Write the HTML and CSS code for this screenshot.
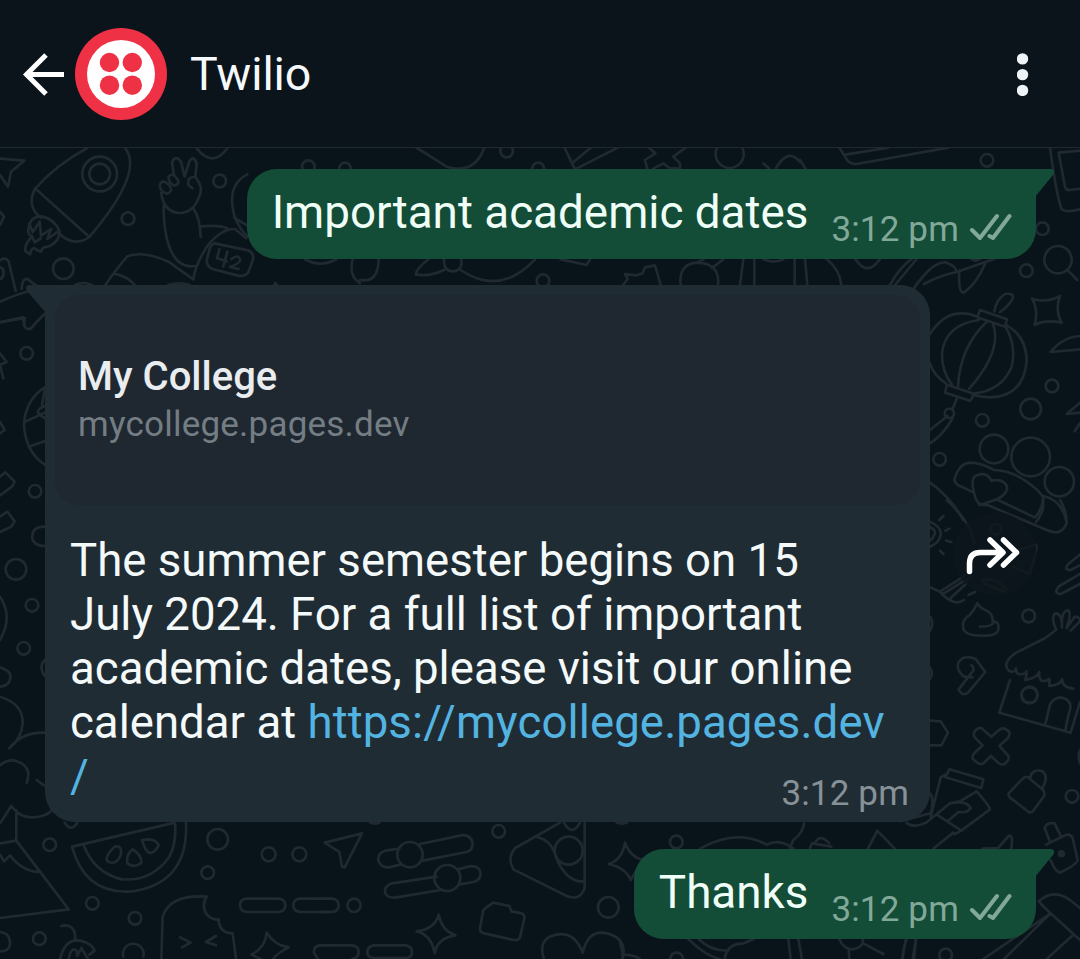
FILE: index.html
```html
<!DOCTYPE html>
<html lang="en">
<head>
<meta charset="utf-8">
<title>Twilio</title>
<link rel="stylesheet" href="styles.css">
</head>
<body>
<div class="app">
  <header class="topbar">
    <svg class="back" width="44" height="44" viewBox="0 0 44 44"><path d="M42 22.500H4M24 3 4.500 22.500l19.500 19.500"/></svg>
    <svg class="avatar" width="92" height="92" viewBox="0 0 92 92"><circle cx="46" cy="46" r="46" fill="#ef3146"/><circle cx="46" cy="46" r="34" fill="#fff"/><g fill="#ef3146"><circle cx="34.500" cy="34.500" r="9.700"/><circle cx="57.300" cy="34.500" r="9.700"/><circle cx="34.500" cy="57.200" r="9.700"/><circle cx="57.300" cy="57.200" r="9.700"/></g></svg>
    <h1 class="contact">Twilio</h1>
    <svg class="more" width="12" height="44" viewBox="0 0 12 44"><circle cx="5.500" cy="6.900" r="5.700"/><circle cx="5.500" cy="22.600" r="5.700"/><circle cx="5.500" cy="38.400" r="5.700"/></svg>
  </header>

  <main class="chat">
    <svg class="wallpaper" width="1080" height="811" viewBox="0 148 1080 811">
      <!-- rocket, peace hand, phone -->
      <g transform="translate(0 145) scale(.33333)">
        <path d="M0 41 73 47 33 80 24 125 0 90M0 200 12 215 0 240M260 10Q165 62 105 132C82 175 103 205 124 218M105 130 268 276M376 10C415 60 375 150 268 276Q222 308 178 266M124 214Q94 214 88 240 79 268 96 274 72 300 76 318L90 328Q96 300 109 314L122 320 130 308 151 302Q181 286 178 257 164 222 124 214M88 235 98 262 119 230 123 272 153 252 142 282 174 260M96 274 104 292 122 280M316 420Q350 370 382 334 430 316 505 350L580 403Q585 360 624 300 666 250 705 252L738 280M344 386Q382 394 404 420"/>
        <circle cx="299" cy="87" r="52"/><circle cx="299" cy="87" r="31"/><circle cx="384" cy="221" r="19"/><circle cx="190" cy="371" r="31"/><circle cx="659" cy="108" r="19"/><circle cx="925" cy="65" r="19"/><circle cx="1035" cy="70" r="17"/>
        <path d="M522 92 516 52Q526 28 543 50L554 94 568 50Q580 28 590 55L586 96Q613 129 596 158 579 205 535 204 490 198 484 144M480 118Q488 101 507 120 522 140 500 146 478 139 480 118M506 95Q518 80 533 104 540 119 522 122 504 112 506 95M577 130 565 120Q561 96 582 96M491 184Q490 250 506 300 530 372 586 363M580 190Q600 219 602 276M602 244Q660 240 682 250M742 88Q690 115 697 180 700 230 742 276M702 218 740 240M590 10Q638 70 682 10M0 346Q18 334 26 350L47 438M0 470Q60 444 90 438M65 432Q66 400 82 402L112 424M0 532 75 519 72 540M0 366Q14 370 10 390 6 402 0 402"/>
        <path d="M644 295 744 316Q767 326 756 352L745 382Q733 396 714 392L640 373Q617 364 621 342L630 307Q635 296 644 295M658 312 651 340 680 349M682 320 670 364M694 342Q716 326 720 344 722 354 690 366L716 372"/>
        <path d="M225 420Q250 408 275 420M505 420Q535 410 570 420M820 424l6-10 8 10M915 342Q960 370 1010 342M1058 342Q1045 395 1080 414"/>
      </g>
      <!-- strip above and below the first outgoing bubble -->
      <g transform="translate(360 140) scale(.33333)">
        <path d="M168 22 260 80Q345 105 373 22M613 22 645 88M638 68 694 22M645 88 775 22M868 24 886 40 855 60 862 86M880 86 910 70 928 84 960 86 960 70 940 50 976 24M1210 70 1228 86M1248 84Q1285 22 1320 66M0 420Q55 430 56 358M205 358Q165 390 168 404 210 410 252 390M252 358Q250 394 280 394 310 390 303 358M302 390Q420 470 525 358M602 358 680 375 690 358M790 434 803 416 795 402 830 406 848 400 855 382 885 376 902 434M962 434Q955 368 1018 368 1080 374 1074 434M1010 368 1030 358M1056 384 1090 358M1140 434 1150 358M1183 358V432M1304 358V432M1210 358Q1240 372 1270 358"/>
        <circle cx="440" cy="33" r="19"/><path d="M516 86Q520 68 535 68T552 86"/><circle cx="1109" cy="42" r="42"/><circle cx="549" cy="422" r="19"/>
      </g>
      <!-- book, photo, magnifier, fish -->
      <g transform="translate(800 0) scale(.33333)">
        <path d="M0 480 17 506M118 443 140 478Q150 494 170 492L445 443M136 464 265 443M750 443Q768 580 784 625 792 640 840 628M840 452 776 458 795 560Q798 572 810 570L840 566M804 812 832 840M166 777Q202 832 240 777M15 777 22 855M80 777Q120 810 124 855M270 855Q300 800 336 777M285 855 350 777M338 870Q400 780 440 788 470 800 470 816 420 826 372 852M470 816 582 777M478 812Q474 880 492 878 530 850 555 792M515 777 526 782 540 777"/>
        <circle cx="561" cy="481" r="19"/><circle cx="727" cy="686" r="19"/><circle cx="679" cy="812" r="19"/><circle cx="774" cy="779" r="41"/>
      </g>
      <!-- lantern, star, thumbs up -->
      <g transform="translate(900 260) scale(.33333)">
        <path d="M90 222Q130 158 188 160 210 160 232 170M232 172 240 150 321 178 315 200ZM283 154Q288 120 315 102 344 98 338 115 330 136 300 156M320 196Q380 230 380 304 370 410 270 412 240 410 218 404M90 310Q100 345 140 372M140 374 136 398 210 422 224 402ZM236 180Q135 195 126 280 125 335 156 374M262 184Q180 260 174 380M278 188Q310 270 208 386M318 202Q350 260 335 320 305 392 222 400M170 416 158 446M142 468 90 510M158 474Q130 525 90 550M396 116Q440 130 480 108 464 150 485 188 440 178 404 194 416 150 396 116M540 228Q490 230 452 276L540 268M540 428 500 462 540 458M540 490 524 514M222 698 175 676Q158 665 166 650 180 610 210 608 244 608 282 630 330 630 380 665 432 702 430 720 420 760 404 772L294 720M222 698Q212 660 225 648 260 632 274 662 315 655 322 684 318 704 294 716L240 736Q225 718 222 698M430 708Q485 720 498 780M90 668Q150 710 190 780"/>
        <circle cx="148" cy="460" r="14"/><circle cx="456" cy="378" r="19"/><circle cx="392" cy="447" r="31"/><circle cx="247" cy="481" r="19"/><circle cx="282" cy="567" r="43"/><circle cx="392" cy="591" r="58"/><circle cx="478" cy="665" r="44"/><circle cx="119" cy="598" r="19"/>
      </g>
      <!-- globe, planet, cupcake on the left edge -->
      <g transform="translate(0 300) scale(.33333)">
        <path d="M0 66 68 52 74 80Q88 98 104 72L133 42M0 160 20 186 0 194 10 235M0 365 14 390 0 400M134 262Q76 300 72 374 76 455 134 494M76 365 134 338M86 440 134 424M134 270 126 314M134 318Q105 330 118 344L134 354M0 530 16 517 44 545 36 560 0 586M0 650 22 635 44 664 34 680 0 696M134 680Q90 680 98 720 108 738 134 738M0 890Q40 950 0 1020M0 1102Q36 1114 31 1135 26 1158 0 1160M134 1080Q115 1100 134 1128M0 1190Q70 1212 68 1270 65 1315 28 1345 65 1296 134 1298M0 1396Q26 1374 50 1384 98 1400 80 1448M110 1440 132 1456M0 1570 34 1518Q60 1554 98 1552 140 1552 160 1526M49 1530V1560"/>
        <circle cx="80" cy="160" r="19"/><circle cx="105" cy="574" r="19"/><circle cx="48" cy="808" r="31"/><circle cx="96" cy="916" r="19"/><circle cx="71" cy="1045" r="19"/>
      </g>
      <!-- compass, swirl, mittens, stall -->
      <g transform="translate(900 500) scale(.33333)">
        <path d="M140 0Q212 65 224 130M236 8Q242 18 260 14L440 90Q485 110 500 70 500 30 480 0M428 0Q436 30 408 66M90 82Q108 90 104 102T90 122M90 65Q126 82 122 105T90 140M118 60 130 48M136 92 148 86M138 122 154 126M120 152 130 162M90 262 120 275 200 224M120 275Q160 322 192 300M126 284 212 230M148 298 200 250M206 284 225 276M540 164 505 192Q490 210 512 210L540 196M540 222 478 258Q458 280 482 282L540 252M232 310Q222 332 208 346 182 360 191 390 206 412 270 406 302 402 294 372 288 362 278 366 280 342 260 332 240 324 232 310M280 367Q278 380 240 380M217 532 192 530Q168 510 175 488 190 462 226 476L256 516 202 580Q184 588 176 568L220 512Q222 500 214 496M468 388Q452 350 466 340 486 338 486 382 482 334 504 330 516 338 500 384L524 350Q540 350 540 364L512 392M468 390 436 414 345 460Q305 490 326 512 345 520 348 505 346 530 376 520 384 502 376 540 410 534 418 516 414 552 444 540 450 528 448 558 482 554 486 538 486 562 520 566 540 550M498 400 540 468M332 518 310 600"/>
        <circle cx="386" cy="348" r="19"/><circle cx="389" cy="584" r="24"/>
        <path d="M90 350Q104 370 90 392M90 504Q102 520 90 536M356 150 406 134Q416 134 396 200L388 222 340 200M246 240Q290 230 318 268L310 274 250 250"/><circle cx="287" cy="88" r="16"/>
      </g>
      <!-- stall base, cross, locks, card -->
      <g transform="translate(900 680) scale(.33333)">
        <path d="M330 0 298 98 512 158 540 66M436 132 450 74Q466 44 496 56 520 70 506 102L496 150M90 122 122 124 144 158 124 196 90 196M248 148 274 170 300 148Q312 140 328 156 330 166 324 174L298 198 324 226Q332 240 310 254 300 254 294 248L273 228 248 252Q234 254 218 236 216 226 224 218L248 196 222 170Q218 154 236 144 244 142 248 148M148 268 250 298 244 324 136 292ZM92 410 122 292 136 284M90 340Q104 360 92 400L0 424M20 428Q40 446 78 428L150 370 180 364 230 334Q270 380 270 388L184 452 114 406M150 370Q200 360 212 384 202 400 176 396L142 424M160 458 100 506M184 452 164 462M366 298 326 340Q324 350 334 356L386 396Q394 400 400 392L434 346 430 330 384 292Q374 288 366 298M390 296Q395 264 428 274 446 290 428 324M450 486 434 444Q440 426 464 430L482 468M438 494 500 464Q512 462 518 474L533 540Q530 554 480 578 464 574 452 540M246 506 294 504 326 468Q340 460 334 506M416 664Q460 624 510 660L540 684M416 664 452 700 312 837M424 674 540 780M452 700 250 837M516 768 440 837M540 210Q532 230 540 250"/>
        <circle cx="388" cy="46" r="24"/><circle cx="516" cy="349" r="19"/><circle cx="484" cy="521" r="7" class="dot"/><circle cx="137" cy="825" r="19"/><path d="M20 777Q10 800 8 837M48 777 42 837"/>
      </g>
      <!-- melon, ice lolly, toggles -->
      <g transform="translate(0 780) scale(.33333)">
        <path d="M49 120V182L206 388 0 414M0 190 49 182M0 224 12 244 30 226Q68 276 122 276M216 200 525 128Q530 190 508 230 455 305 366 298 280 278 250 192M216 200Q255 345 396 334 566 310 558 128M344 200Q368 194 362 226 348 258 324 244 310 234 344 200M398 208Q426 226 424 248 404 266 382 250 378 224 398 208M426 180Q466 172 476 196 462 222 448 218 436 214 426 180M194 128Q212 158 232 128M484 537 488 410Q510 342 620 350 604 374 618 400 634 422 656 418 658 460 698 460L708 537M540 472 572 488 546 502M648 468 618 486 648 496M184 438Q226 428 226 478M180 537Q196 474 240 482 276 490 284 512L268 524M206 537Q214 498 230 512L232 528 244 504 264 537M800 458Q824 496 866 502 830 520 820 537M754 524Q796 504 800 458M754 524 782 537M0 456Q28 458 30 486T0 514M740 356H836Q856 358 856 376T836 396H740Q720 394 720 376T740 356M990 356H900Q880 358 880 376T900 396H990M990 496H960Q940 498 942 518L954 537"/>
        <circle cx="149" cy="194" r="19"/><circle cx="277" cy="370" r="19"/><circle cx="405" cy="415" r="19"/><circle cx="118" cy="476" r="19"/><circle cx="653" cy="178" r="31"/><circle cx="623" cy="278" r="19"/><circle cx="806" cy="223" r="21"/><circle cx="898" cy="223" r="21"/><path d="M370 530A31 31 0 1 1 430 530"/>
      </g>
      <!-- arrow, sliders, pizza, folder, heart -->
      <g transform="translate(320 780) scale(.33333)">
        <path d="M14 188 126 160 74 262 66 260 58 216ZM238 206 196 212Q170 220 176 244 184 264 206 262L242 254M300 192 424 166Q450 162 458 188 458 212 440 216L308 242M350 290 216 310Q190 320 196 340 206 356 230 352L362 330M414 268 454 258Q482 260 482 282 480 302 460 306L416 314M720 128 586 204Q560 232 580 268L740 348Q780 364 794 324V128M654 172Q690 180 704 218 724 288 774 304L794 304M732 128Q755 172 780 128M915 188Q930 232 970 240M915 188Q906 240 866 252 918 264 932 300L950 270M0 356H36Q56 358 56 376T36 396H0M0 496H96Q116 498 116 516T96 537M162 496H256Q276 498 276 516T256 534H162Q142 532 142 516T162 496M356 404Q366 452 406 466 352 474 344 520 334 464 290 454 344 448 356 404M502 380 520 368 568 378 574 394 606 400Q616 406 612 420L600 472Q596 482 580 480L492 460Q478 456 480 444L490 390ZM672 537Q654 484 694 468 760 444 788 518 806 446 860 460 922 474 908 537M908 524Q944 524 960 537M150 128l18 3 10-3M890 128l16 3 14-3"/>
        <circle cx="270" cy="224" r="38"/><circle cx="382" cy="294" r="39"/><circle cx="536" cy="154" r="19"/><circle cx="102" cy="376" r="20"/><circle cx="746" cy="212" r="42"/><circle cx="865" cy="382" r="31"/>
      </g>
      <!-- fragments round the last bubble -->
      <g transform="translate(620 760) scale(.33333)">
        <path d="M240 266Q350 204 440 254 480 234 520 266M552 190Q548 220 520 240L510 264M570 264 576 250 634 260M586 248Q600 220 628 250M744 266 772 212 824 266M205 537Q260 590 300 597M236 537Q270 572 320 572M314 597Q320 550 372 550L400 537M505 537 512 597M535 537 546 597M658 537Q670 568 700 568 734 560 728 537M686 568 688 597M730 550 790 582M858 537 846 597M888 537 878 597M0 550Q10 575 8 597"/>
        <circle cx="169" cy="246" r="19"/><path d="M150 597Q154 578 170 578T190 597"/>
      </g>
    </svg>

    <div class="row sent">
      <div class="bubble out">
        <span class="text">Important academic dates</span>
        <span class="time">3:12 pm</span>
        <svg class="ticks" width="44" height="30" viewBox="0 0 44 30"><path d="M4 18 12 26 29 4M21.500 24 25 26 41.500 4"/></svg>
        <svg class="tail" width="20" height="30" viewBox="0 0 20 30"><path d="M0 0H16Q21 1 18 6L0 28Z"/></svg>
      </div>
    </div>

    <div class="row received">
      <div class="bubble in">
        <svg class="tail" width="20" height="30" viewBox="0 0 20 30"><path d="M20 0H3Q-2 1 1 6L20 28Z"/></svg>
        <div class="preview">
          <div class="site">My College</div>
          <div class="domain">mycollege.pages.dev</div>
        </div>
        <p class="body">The summer semester begins on 15<br>July 2024. For a full list of important<br>academic dates, please visit our online<br>calendar at <a class="link">https://mycollege.pages.dev<br>/</a></p>
        <span class="time">3:12 pm</span>
      </div>
      <div class="forward"><svg width="84" height="84" viewBox="0 0 84 84"><path d="M16.500 59.500V51.500Q16.500 40.500 27.500 40.500H48M37 28 50 40.500 37 53M50.500 28 63.500 40.500 50.500 53"/></svg></div>
    </div>

    <div class="row sent last">
      <div class="bubble out">
        <span class="text">Thanks</span>
        <span class="time">3:12 pm</span>
        <svg class="ticks" width="44" height="30" viewBox="0 0 44 30"><path d="M4 18 12 26 29 4M21.500 24 25 26 41.500 4"/></svg>
        <svg class="tail" width="20" height="30" viewBox="0 0 20 30"><path d="M0 0H16Q21 1 18 6L0 28Z"/></svg>
      </div>
    </div>
  </main>
</div>
</body>
</html>
```
FILE: styles.css
```css
* { box-sizing: border-box; }
body { margin: 0; background: #08131a; font-family: Roboto, "Liberation Sans", sans-serif; }
svg { display: block; flex: none; }
.app { width: 1080px; height: 959px; display: flex; flex-direction: column; overflow: hidden; }
.topbar { height: 148px; flex: none; display: flex; align-items: center; padding: 0 51px 0 22px; background: #0b141b; border-bottom: 1px solid #20292f; }
.back { fill: none; stroke: #fff; stroke-width: 5; }
.avatar { margin-left: 9px; }
.contact { margin: 0 auto 0 23px; font-size: 46.5px; line-height: 56px; font-weight: 400; letter-spacing: -.1px; color: #f5f9fc; }
.more { fill: #eef3f7; }
.chat { position: relative; flex: 1; display: flex; flex-direction: column; padding: 21px 44px 0 45px; }
.wallpaper { position: absolute; inset: 0; fill: none; stroke: #20292f; stroke-width: 8; stroke-linecap: round; stroke-linejoin: round; }
.dot { fill: #20292f; }
.row { position: relative; display: flex; }
.sent { justify-content: flex-end; }
.received { margin: 26px -5px 27px 0; align-items: center; gap: 23px; }
.bubble { position: relative; color: #f4f9fa; font-size: 45.6px; line-height: 54px; }
.out { height: 90px; display: flex; align-items: flex-start; padding: 17px 24px 0 25px; background: #144d37; border-radius: 30px 0 30px 30px; color: #effff8; }
.out .text { font-size: 45.8px; }
.time { font-size: 35px; line-height: 41px; letter-spacing: .15px; white-space: nowrap; }
.out .time { margin: 23px 0 0 23px; color: #82a89a; }
.out .ticks { margin: 26px 0 0 9px; fill: none; stroke: #82a89a; stroke-width: 4; stroke-linecap: round; stroke-linejoin: round; }
.tail { position: absolute; top: 0; }
.out .tail { left: 100%; margin-left: -1px; fill: #144d37; }
.in .tail { right: 100%; margin-right: -1px; fill: #202c33; }
.in { width: 885px; height: 537px; padding: 10px 10px 0; background: #202c33; border-radius: 0 30px 30px 30px; }
.preview { height: 210px; padding: 58px 23px 0; background: #1f2830; border-radius: 24px; }
.site { font-size: 40px; line-height: 48px; font-weight: 500; color: #e9edf0; }
.domain { font-size: 35px; line-height: 42px; letter-spacing: .22px; color: #747d84; margin-top: 3px; }
.body { margin: 29px 0 0 15px; white-space: nowrap; }
.link { color: #53b4e2; letter-spacing: .1px; }
.in .time { position: absolute; right: 21px; bottom: 8px; color: #879198; }
.forward { width: 84px; height: 84px; border-radius: 50%; background: rgba(13, 22, 28, .8); }
.forward svg { fill: none; stroke: #fff; stroke-width: 5.5; stroke-linecap: round; stroke-linejoin: round; }
```
